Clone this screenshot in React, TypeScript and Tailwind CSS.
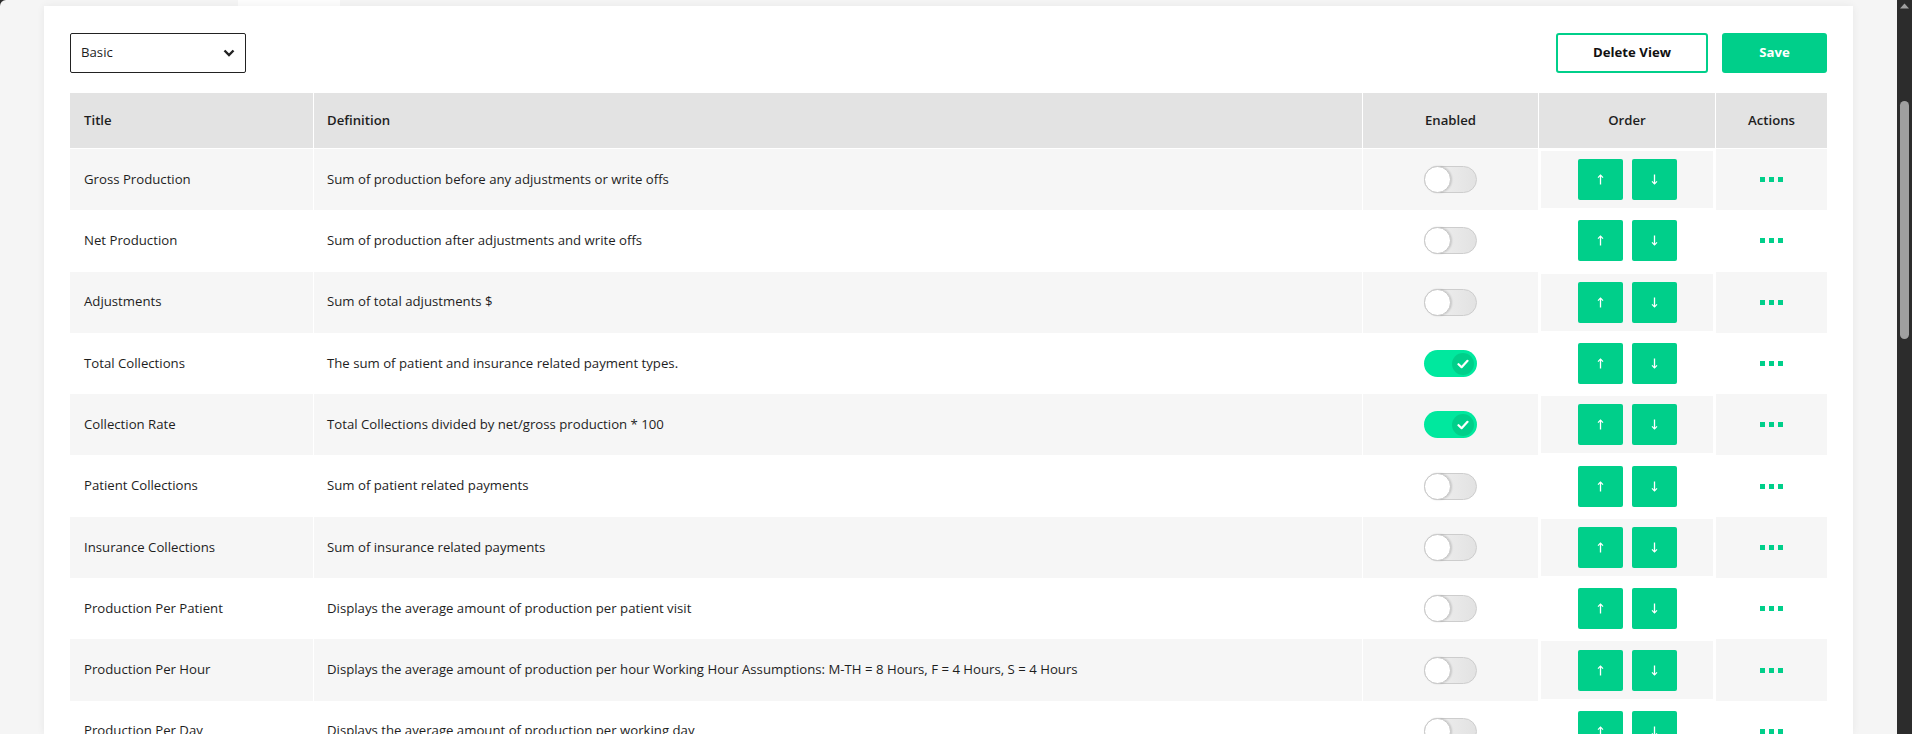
import React from 'react';

const rows = [
  { title: 'Gross Production', def: 'Sum of production before any adjustments or write offs', on: false },
  { title: 'Net Production', def: 'Sum of production after adjustments and write offs', on: false },
  { title: 'Adjustments', def: 'Sum of total adjustments $', on: false },
  { title: 'Total Collections', def: 'The sum of patient and insurance related payment types.', on: true },
  { title: 'Collection Rate', def: 'Total Collections divided by net/gross production * 100', on: true },
  { title: 'Patient Collections', def: 'Sum of patient related payments', on: false },
  { title: 'Insurance Collections', def: 'Sum of insurance related payments', on: false },
  { title: 'Production Per Patient', def: 'Displays the average amount of production per patient visit', on: false },
  {
    title: 'Production Per Hour',
    def: 'Displays the average amount of production per hour Working Hour Assumptions: M-TH = 8 Hours, F = 4 Hours, S = 4 Hours',
    on: false,
  },
  { title: 'Production Per Day', def: 'Displays the average amount of production per working day', on: false },
];

const Toggle = ({ on }: { on: boolean }) =>
  on ? (
    <div className="relative w-[53px] h-[27px] rounded-full bg-[#00e89e]">
      <div className="absolute right-[3px] top-[2.5px] w-[22px] h-[22px] rounded-full bg-[#00cf8a] flex items-center justify-center">
        <svg width="12" height="10" viewBox="0 0 12 10">
          <path d="M1.5 5.2 L4.6 8.2 L10.5 1.8" fill="none" stroke="white" strokeWidth="2.2" strokeLinecap="round" strokeLinejoin="round" />
        </svg>
      </div>
    </div>
  ) : (
    <div className="relative w-[53px] h-[27px] rounded-full bg-gradient-to-r from-[#f2f2f2] to-[#e2e2e2] border border-[#cdcdcd]">
      <div className="absolute -left-px -top-px w-[27px] h-[27px] rounded-full bg-white border border-[#c8c8c8] shadow-[1px_0_2px_rgba(0,0,0,0.15)]" />
    </div>
  );

const Arrow = ({ down }: { down?: boolean }) => (
  <svg width="7" height="11" viewBox="0 0 7 11" className={down ? 'rotate-180' : ''}>
    <path d="M3.5 1 V10.5" stroke="white" strokeWidth="1.3" />
    <path d="M1 3.6 L3.5 1 L6 3.6" fill="none" stroke="white" strokeWidth="1.2" />
  </svg>
);

export default function App() {
  return (
    <div className="flex h-[734px] w-full overflow-hidden bg-[#2c2c2c] font-['Open_Sans',sans-serif] text-[13.2px] text-[#1e1e1e]">
      <div className="flex-1 flex flex-col bg-[#f5f5f5] rounded-tl-[6px]">
        <div className="h-[6px] flex pl-[238px]">
          <div className="w-[102px] h-full bg-[#fdfdfd]" />
        </div>
        <div className="flex-1 mx-[44px] bg-white shadow-[0_0_8px_rgba(0,0,0,0.06)] px-[26px] pt-[27px] overflow-hidden">
          <div className="flex items-center justify-between h-[40px]">
            <div className="w-[176px] h-[40px] border border-[#222] rounded-[2px] flex items-center justify-between pl-[10px] pr-[10px]">
              <span>Basic</span>
              <svg width="12" height="8" viewBox="0 0 12 8">
                <path d="M1.5 1.5 L6 6 L10.5 1.5" fill="none" stroke="#222" strokeWidth="2.4" />
              </svg>
            </div>
            <div className="flex items-center gap-[14px]">
              <button className="w-[152px] h-[40px] border-2 border-[#00cf8a] rounded-[3px] font-bold text-[#111]">
                Delete View
              </button>
              <button className="w-[105px] h-[40px] bg-[#00cf8a] rounded-[3px] font-bold text-white">Save</button>
            </div>
          </div>

          <div className="mt-[20px]">
            <div className="grid grid-cols-[243px_1049px_176px_177px_1fr] h-[56px] bg-[#e3e3e3] border-b border-white font-semibold">
              <div className="flex items-center pl-[14px]">Title</div>
              <div className="flex items-center pl-[13px] border-l border-white">Definition</div>
              <div className="flex items-center justify-center border-l border-white">Enabled</div>
              <div className="flex items-center justify-center border-l border-white">Order</div>
              <div className="flex items-center justify-center border-l border-white">Actions</div>
            </div>
            {rows.map((r, i) => (
              <div
                key={r.title}
                className={`grid grid-cols-[243px_1049px_176px_177px_1fr] h-[61.3px] ${i % 2 === 0 ? 'bg-[#f6f6f6]' : 'bg-white'}`}
              >
                <div className="flex items-center pl-[14px]">{r.title}</div>
                <div className="flex items-center pl-[13px] border-l border-white">{r.def}</div>
                <div className="flex items-center justify-center border-l border-white">
                  <Toggle on={r.on} />
                </div>
                <div className="flex items-center justify-center gap-[9px] border-l border-white shadow-[inset_0_0_0_2px_white]">
                  <button className="w-[45px] h-[41px] rounded-[2px] bg-[#00cf8a] flex items-center justify-center">
                    <Arrow />
                  </button>
                  <button className="w-[45px] h-[41px] rounded-[2px] bg-[#00cf8a] flex items-center justify-center">
                    <Arrow down />
                  </button>
                </div>
                <div className="flex items-center justify-center gap-[4px] border-l border-white">
                  <span className="w-[5px] h-[5px] bg-[#00cf8a]" />
                  <span className="w-[5px] h-[5px] bg-[#00cf8a]" />
                  <span className="w-[5px] h-[5px] bg-[#00cf8a]" />
                </div>
              </div>
            ))}
          </div>
        </div>
      </div>
      <div className="w-[15px] flex flex-col items-center bg-[#2c2c2c]">
        <svg width="9" height="6" viewBox="0 0 9 6" className="mt-[3px]">
          <path d="M0 5.5 L4.5 0.5 L9 5.5 Z" fill="#a0a0a0" />
        </svg>
        <div className="mt-[92px] w-[9px] h-[238px] rounded-full bg-[#9f9f9f]" />
      </div>
    </div>
  );
}
